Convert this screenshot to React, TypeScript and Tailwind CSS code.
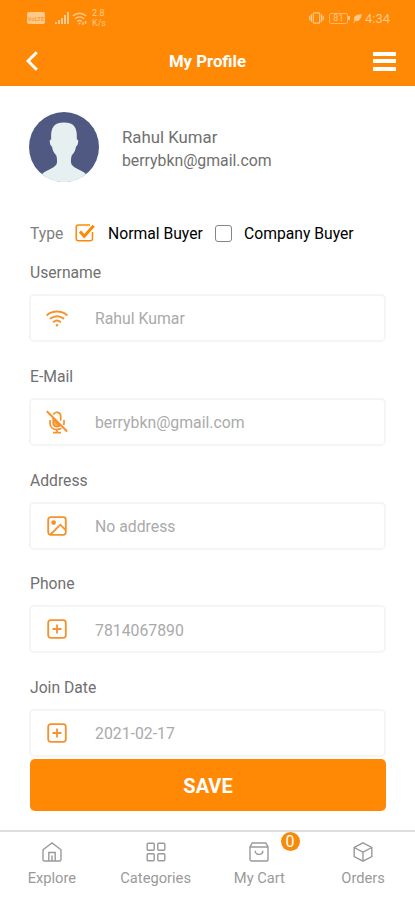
import type { ReactNode } from "react";

interface Field {
  id: string;
  label: string;
  value: string;
  icon: ReactNode;
}

interface Tab {
  title: string;
  icon: ReactNode;
  badge?: number;
}

const WifiIcon = () => (
  <svg width="22" height="17" viewBox="0 0 22 17" fill="none" stroke="currentColor" strokeWidth="1.9" strokeLinecap="round">
    <path d="M1.200 5C6.600.300 15.400.300 20.800 5" />
    <path d="M4.500 8.500c3.700-3.100 9.300-3.100 13 0" />
    <path d="M7.700 11.800c1.900-1.500 4.700-1.500 6.600 0" />
    <circle cx="11" cy="15.200" r="1.200" fill="currentColor" stroke="none" />
  </svg>
);

const MicOffIcon = () => (
  <svg width="22" height="24" viewBox="0 0 22 24" fill="none" stroke="currentColor" strokeWidth="1.700">
    <path d="M7.400 4.600a3.800 3.800 0 0 1 7.300 1.400v4.800" />
    <path d="M7.200 9v4c0 2.200 1.700 3.700 3.800 3.700 1 0 1.900-.3 2.600-.9L7.200 9Z" fill="currentColor" fillOpacity=".75" />
    <path d="M4 10v3c0 4 3 6.600 7 6.600 1.700 0 3.200-.5 4.400-1.300M18 10v3c0 .7-.1 1.300-.3 1.900M11 19.600V23M7 22.600h8" />
    <path d="m.8 1.200 20.400 20.300" strokeWidth="2" />
  </svg>
);

const ImageIcon = () => (
  <svg width="20" height="20" viewBox="0 0 20 20" fill="none" stroke="currentColor" strokeWidth="1.800">
    <rect x="1.200" y="1.200" width="17.600" height="17.600" rx="2.500" />
    <circle cx="6.600" cy="6.600" r="1.500" fill="currentColor" />
    <path d="M3.500 18.500 13.300 8.700l5.400 5.400" />
  </svg>
);

const PlusIcon = () => (
  <svg width="20" height="20" viewBox="0 0 20 20" fill="none" stroke="currentColor" strokeWidth="1.800">
    <rect x="1.200" y="1.200" width="17.600" height="17.600" rx="2.500" />
    <path d="M10 5.500v9M5.500 10h9" />
  </svg>
);

const fields: Field[] = [
  { id: "username", label: "Username", value: "Rahul Kumar", icon: <WifiIcon /> },
  { id: "email", label: "E-Mail", value: "berrybkn@gmail.com", icon: <MicOffIcon /> },
  { id: "address", label: "Address", value: "No address", icon: <ImageIcon /> },
  { id: "phone", label: "Phone", value: "7814067890", icon: <PlusIcon /> },
  { id: "joined", label: "Join Date", value: "2021-02-17", icon: <PlusIcon /> },
];

const tabs: Tab[] = [
  {
    title: "Explore",
    icon: (
      <>
        <path d="M1 7.800 10 1l9 6.800v9.700c0 .9-.6 1.500-1.500 1.500h-15C1.600 19 1 18.400 1 17.500Z" />
        <path d="M6.800 19v-8.500h6.400V19M10 13.500V19" />
      </>
    ),
  },
  {
    title: "Categories",
    icon: (
      <>
        <rect x="1.200" y="1.200" width="7" height="7" rx="1" />
        <rect x="11.800" y="1.200" width="7" height="7" rx="1" />
        <rect x="1.200" y="11.800" width="7" height="7" rx="1" />
        <rect x="11.800" y="11.800" width="7" height="7" rx="1" />
      </>
    ),
  },
  {
    title: "My Cart",
    badge: 0,
    icon: (
      <>
        <path d="M1 4.800 3.200 1h13.600L19 4.800v12.400c0 1.100-.8 1.800-1.800 1.800H2.800C1.800 19 1 18.300 1 17.200ZM1 5h18" />
        <path d="M6.200 8.800c0 2.100 1.700 3.600 3.800 3.600s3.800-1.500 3.800-3.600" />
      </>
    ),
  },
  {
    title: "Orders",
    icon: <path d="m10 .8 8.800 4.700v9L10 19.200l-8.800-4.700v-9ZM1.200 5.500l8.800 4.700 8.800-4.700M10 10.200v9" />,
  },
];

const StatusBar = () => (
  <div className="flex h-9 items-center justify-between pl-[27px] pr-[25px] text-[#ffc98a]">
    <div className="flex items-center">
      <span className="flex h-3 w-[18px] items-center justify-center rounded-[2px] bg-[#ffc98a] text-[6px] font-bold text-[#ff9a2e]">
        VoLTE
      </span>
      <svg className="ml-[10px]" width="14" height="12" viewBox="0 0 14 12" fill="currentColor">
        <path d="M0 10h2v2H0zM3 8h2v4H3zM6 6h2v6H6zM9 3h2v9H9zM12 0h2v12h-2z" />
      </svg>
      <svg className="ml-[3px]" width="15" height="13" viewBox="0 0 15 13" fill="none" stroke="currentColor" strokeWidth="1.500">
        <path d="M.8 4c4-3.700 9.400-3.700 13.400 0M3 6.800c2.600-2.300 6.400-2.300 9 0M5.300 9.300c1.300-1 3.100-1 4.400 0" />
        <path d="M6.500 11.500h2M11 10v3M13.500 9v3" />
      </svg>
      <span className="ml-[5px] flex flex-col text-[9px] leading-[10.500px]">
        <span>2.8</span>
        <span>K/s</span>
      </span>
    </div>
    <div className="flex items-center">
      <svg width="15" height="12" viewBox="0 0 16 13" fill="none" stroke="currentColor" strokeWidth="1.300">
        <rect x="4.500" y="1" width="7" height="11" rx="1" />
        <path d="M2.500 2.500v8M13.500 2.500v8M.7 4v5M15.300 4v5" />
      </svg>
      <span className="ml-[5px] flex h-[11px] w-[19px] items-center justify-center rounded-[2px] border border-[#ffb766] text-[9px] leading-none">
        81
      </span>
      <span className="h-1 w-[2px] bg-[#ffc98a]" />
      <svg className="ml-[3px]" width="9" height="9" viewBox="0 0 10 10" fill="currentColor">
        <path d="M9.800.2C5 .3 1.200 1.700 1 5c0 1 .3 1.800.8 2.300L.4 9.400l.8.500 1.600-2C7 8.600 9 5 9.800.2Z" />
      </svg>
      <span className="ml-[3px] text-[13px] leading-none">4:34</span>
    </div>
  </div>
);

const Avatar = () => (
  <svg width="70" height="70" viewBox="0 0 70 70">
    <circle cx="35" cy="35" r="35" fill="#505981" />
    <path
      d="M13 62.200C17 57.500 27.500 56 28 50.500c.2-2.500-.1-5-.8-7.200-2.300-2.300-3.700-5-4.200-8.800-1.700-.4-2.700-5-2-6.500.2-.5.600-.7 1.200-.6-.7-11.500 2.200-16.900 12.800-16.900s13.500 5.400 12.800 16.900c.600-.1 1 .1 1.200.6.700 1.500-.3 6.100-2 6.500-.5 3.800-1.900 6.500-4.200 8.800-.7 2.200-1 4.700-.8 7.200.5 5.500 11 7 15 11.700C51 67.200 43.500 70 35 70s-16-2.800-22-7.800Z"
      fill="#e6f0f1"
    />
  </svg>
);

const App = () => {
  return (
    <div className="flex h-[900px] w-full flex-col overflow-hidden bg-white font-['Roboto',sans-serif] text-[#707070]">
      {/* Header */}
      <header className="h-[86px] shrink-0 bg-[#ff8804]">
        <StatusBar />
        <div className="flex h-[50px] items-center justify-between pl-[26px] pr-[19px] text-white">
          <svg width="12" height="20" viewBox="0 0 12 20" fill="none" stroke="currentColor" strokeWidth="3">
            <path d="M10.800 1.200 2 10l8.800 8.800" />
          </svg>
          <h1 className="ml-[4px] pt-[2px] text-[16.800px] font-bold">My Profile</h1>
          <div className="flex flex-col gap-[3.500px]">
            <span className="h-[4px] w-[23px] bg-white" />
            <span className="h-[4px] w-[23px] bg-white" />
            <span className="h-[4px] w-[23px] bg-white" />
          </div>
        </div>
      </header>

      <main className="flex min-h-0 flex-1 flex-col px-[29px]">
        <div className="mt-[26px] flex h-[70px] items-center gap-[23px]">
          <Avatar />
          <div className="pt-[3px] leading-[23px]">
            <p className="text-[16.800px]">Rahul Kumar</p>
            <p className="text-[15.800px]">berrybkn@gmail.com</p>
          </div>
        </div>

        {/* Buyer type */}
        <div className="mt-[39px] flex h-6 items-center text-[15.700px] text-black">
          <span className="w-[46px] pl-px pt-px text-[#808080]">Type</span>
          <svg width="20" height="20" viewBox="0 0 20 20" fill="none" stroke="#ff8804">
            <path d="M17.500 9v6.500c0 1.400-.9 2.300-2.300 2.300H3.500c-1.400 0-2.300-.9-2.300-2.300V4.200c0-1.400.9-2.300 2.300-2.300H15" strokeWidth="1.500" />
            <path d="m5 8.500 4.200 4.700 9.500-10.500" strokeWidth="3" />
          </svg>
          <span className="ml-[13px] w-[107px] pt-px">Normal Buyer</span>
          <span className="h-[17px] w-[17px] rounded-[3px] border-[1.500px] border-[#858585]" />
          <span className="ml-[12px] pt-px">Company Buyer</span>
        </div>

        <div className="mt-[17px] flex flex-col">
          {fields.map(field => (
            <div key={field.id} className="flex h-[103.800px] shrink-0 flex-col">
              <span className="h-[22px] pl-px text-[15.700px] leading-[22px]">{field.label}</span>
              <div className="mt-[10px] flex h-[48px] items-center rounded-[5px] border-2 border-[#f5f5f5]">
                <span className="flex w-[52px] justify-center text-[#f6912b]">{field.icon}</span>
                <span className="ml-[12px] pt-[2px] text-[15.800px] text-[#aaa]">{field.value}</span>
              </div>
            </div>
          ))}
        </div>
      </main>

      {/* Save button stays above the tab bar */}
      <div className="shrink-0 bg-white pb-[19px] pl-[30px] pr-[29px]">
        <button className="h-[52px] w-full rounded-[5px] bg-[#ff8804] pt-[2px] text-xl font-bold text-white">SAVE</button>
      </div>

      <nav className="grid h-[70px] shrink-0 grid-cols-4 border-t-2 border-[#dedede] bg-white text-[#9a9a9a]">
        {tabs.map(tab => (
          <div key={tab.title} className="relative flex flex-col items-center pt-[10px]">
            <svg width="20" height="20" viewBox="0 0 20 20" fill="none" stroke="currentColor" strokeWidth="1.400">
              {tab.icon}
            </svg>
            <span className="mt-[6px] text-[14.700px] leading-5">{tab.title}</span>
            {tab.badge !== undefined && (
              <span className="absolute left-[73px] top-0 flex h-[19px] w-[19px] items-center justify-center rounded-full bg-[#f58a0b] text-base text-white">
                {tab.badge}
              </span>
            )}
          </div>
        ))}
      </nav>
    </div>
  );
};

export default App;
